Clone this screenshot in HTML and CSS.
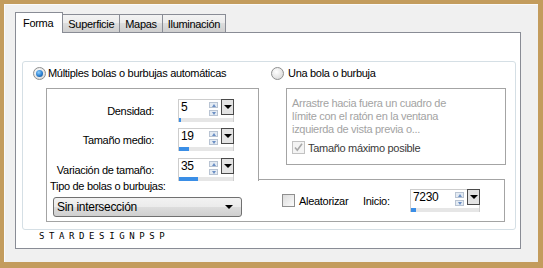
FILE: index.html
```html
<!DOCTYPE html>
<html lang="es">
<head>
<meta charset="utf-8">
<title>Burbujas</title>
<link rel="stylesheet" href="styles.css">
</head>
<body>
<div class="frame">
  <div class="tabs">
    <div class="tab active">Forma</div>
    <div class="tab">Superficie</div>
    <div class="tab">Mapas</div>
    <div class="tab">Iluminación</div>
  </div>
  <div class="panel">
    <div class="group">
      <div class="radios">
        <div class="radio-row first"><span class="radio on"></span><span>Múltiples bolas o burbujas automáticas</span></div>
        <div class="radio-row"><span class="radio"></span><span>Una bola o burbuja</span></div>
      </div>
      <div class="body">
        <div class="lbox">
          <div class="lbox-top">
            <div class="field">
              <span class="flabel">Densidad:</span>
              <div class="spin">
                <div class="spin-main"><span class="val">5</span><span class="arrows"><i class="up"></i><i class="down"></i></span><span class="dd"></span></div>
                <div class="bar"><div class="fill" style="width:2px"></div></div>
              </div>
            </div>
            <div class="field f2">
              <span class="flabel">Tamaño medio:</span>
              <div class="spin">
                <div class="spin-main"><span class="val">19</span><span class="arrows"><i class="up"></i><i class="down"></i></span><span class="dd"></span></div>
                <div class="bar"><div class="fill" style="width:10px"></div></div>
              </div>
            </div>
            <div class="field f3">
              <span class="flabel">Variación de tamaño:</span>
              <div class="spin">
                <div class="spin-main"><span class="val">35</span><span class="arrows"><i class="up"></i><i class="down"></i></span><span class="dd"></span></div>
                <div class="bar"><div class="fill" style="width:19px"></div></div>
              </div>
            </div>
          </div>
          <div class="lbox-bottom">
            <div class="tipo">Tipo de bolas o burbujas:</div>
            <div class="select"><span>Sin intersección</span><span class="caret"></span></div>
          </div>
        </div>
        <div class="rcol">
          <div class="rbox">
            <p class="hint">Arrastre hacia fuera un cuadro de<br>límite con el ratón en la ventana<br>izquierda de vista previa o...</p>
            <div class="chk-row"><span class="check disabled"><svg width="11" height="11" viewBox="0 0 11 11"><path d="M2 5.5 L4.3 8.2 L9 1.8" fill="none" stroke="#a8a8a8" stroke-width="1.6"/></svg></span><span class="chk-text">Tamaño máximo posible</span></div>
          </div>
          <div class="bbox">
            <span class="check"></span><span class="alea">Aleatorizar</span>
            <span class="inicio">Inicio:</span>
            <div class="spin wide">
              <div class="spin-main"><span class="val">7230</span><span class="arrows"><i class="up"></i><i class="down"></i></span><span class="dd"></span></div>
              <div class="bar"><div class="fill" style="width:5px"></div></div>
            </div>
          </div>
        </div>
      </div>
    </div>
    <div class="mark">STARDESIGNPSP</div>
  </div>
</div>
</body>
</html>
```
FILE: styles.css
```css
* { box-sizing: border-box; }
html, body { margin: 0; padding: 0; }
body {
  width: 543px;
  height: 268px;
  font-family: "Liberation Sans", Arial, sans-serif;
  font-size: 11px;
  letter-spacing: -0.3px;
  color: #000;
  background: #c39c5d;
}
.frame {
  width: 543px;
  height: 268px;
  border-style: solid;
  border-color: #c39c5d;
  border-width: 4px 5px 6px 4px;
  background: #f0f0f0;
  box-shadow: inset 1px 1px 0 #fafafa;
  padding: 8px 17px 0 11px;
}
.tabs {
  display: flex;
  align-items: flex-end;
  height: 21px;
  margin-bottom: -1px;
  position: relative;
  z-index: 1;
}
.tab {
  height: 18px;
  margin-bottom: 1px;
  padding: 2px 5px 0 5px;
  border: 1px solid #898c95;
  border-bottom: none;
  border-left: none;
  background: linear-gradient(#f3f3f3, #ebebeb 50%, #dddddd 50%, #cfcfcf);
  line-height: 14px;
}
.tab.active {
  height: 21px;
  margin-bottom: 0;
  padding: 3px 9px 0 7px;
  border-left: 1px solid #898c95;
  background: #fff;
  line-height: 14px;
}
.panel {
  width: 506px;
  height: 217px;
  border: 1px solid #898c95;
  background: #fff;
  padding: 28px 0 0 6px;
}
.group {
  width: 494px;
  border: 1px solid #d5dfe5;
  border-radius: 3px;
  padding: 5px 0 7px 10px;
}
.radios { display: flex; height: 13px; align-items: center; }
.radio-row { display: flex; align-items: center; gap: 2px; line-height: 13px; }
.radio-row.first { width: 238px; }
.radio-row + .radio-row { gap: 4px; }
.radio {
  width: 13px; height: 13px;
  border-radius: 50%;
  border: 1px solid #8e8f8f;
  background: radial-gradient(circle at 40% 35%, #ffffff, #e0e0e0 70%, #cfcfcf);
  display: flex; align-items: center; justify-content: center;
}
.radio.on::after {
  content: "";
  width: 7px; height: 7px; border-radius: 50%;
  background: radial-gradient(circle at 40% 35%, #8fd0ff, #2a7fd0 55%, #0b3f7a);
}
.body { display: flex; margin: 8px 0 0 13px; }
.lbox { width: 213px; }
.lbox-top {
  border: 1px solid #a4a4a4;
  border-bottom: none;
  padding-top: 10px;
  height: 93px;
}
.field { display: flex; align-items: center; }
.field.f2 { margin-top: 6px; }
.field.f3 { margin-top: 7px; }
.flabel { width: 107px; text-align: right; padding-top: 1px; }
.spin {
  width: 56px; height: 23px;
  margin-left: 24px;
  border: 1px solid #cdcdcd;
  background: #fff;
  display: flex; flex-direction: column;
}
.spin.wide { width: 70px; height: 23px; margin-left: 0; }
.spin-main { display: flex; height: 16px; }
.val { flex: 1; padding: 1px 0 0 2px; line-height: 12px; font-size: 12px; }
.arrows { width: 10px; display: flex; flex-direction: column; gap: 2px; padding-top: 2px; margin-right: 2px; }
.arrows i {
  display: block; width: 9px; height: 6px;
  border: 1px solid #b9c4d3;
  background: #e4ebf3;
  position: relative;
}
.arrows i::after {
  content: ""; position: absolute; left: 1.5px; top: 1px;
  border-left: 2.5px solid transparent; border-right: 2.5px solid transparent;
}
.arrows .up::after { border-bottom: 3px solid #6b8fc4; }
.arrows .down::after { border-top: 3px solid #6b8fc4; }
.dd {
  width: 13px; height: 16px;
  margin-top: -1px; margin-right: -1px;
  border: 1px solid #4a4a4a;
  background: #e3e3e3;
  display: flex; align-items: center; justify-content: center;
}
.dd::after {
  content: "";
  border-left: 4px solid transparent; border-right: 4px solid transparent;
  border-top: 4px solid #000;
}
.bar { height: 4px; margin-top: 2px; background: #e6e6e6; }
.fill { height: 4px; background: #3a8ee6; }
.lbox-bottom {
  height: 42px;
  border-left: 1px solid #a4a4a4;
  border-bottom: 1px solid #a4a4a4;
  padding: 0 0 0 3px;
}
.tipo { line-height: 13px; margin-top: -1px; }
.select {
  width: 189px; height: 20px;
  margin: 4px 0 0 3px;
  border: 1px solid #707070;
  border-radius: 3px;
  background: linear-gradient(#f2f2f2, #ebebeb 50%, #dddddd 50%, #cfcfcf);
  display: flex; align-items: center; justify-content: space-between;
  padding: 0 8px 0 3px;
  font-size: 12px;
}
.caret {
  border-left: 4px solid transparent; border-right: 4px solid transparent;
  border-top: 4px solid #000;
}
.rcol { width: 246px; }
.rbox {
  width: 220px; height: 77px;
  margin-left: 27px;
  border: 1px solid #a4a4a4;
  padding: 8px 0 0 5px;
}
.hint { margin: 0; color: #a3a3a3; line-height: 13px; }
.chk-row { display: flex; align-items: center; gap: 3px; margin-top: 5px; color: #3a3a3a; }
.check {
  width: 13px; height: 13px;
  border: 1px solid #8f8f8f;
  background: linear-gradient(135deg, #dcdcdc, #fbfbfb);
  display: inline-flex; align-items: center; justify-content: center;
}
.check.disabled { border-color: #c2c2c2; background: #f4f4f4; }
.bbox {
  height: 43px;
  margin-top: 14px;
  border: 1px solid #a4a4a4;
  border-left: none;
  display: flex; align-items: center;
  padding-left: 23px;
}
.alea { margin-left: 4px; width: 64px; }
.inicio { width: 47px; }
.mark {
  margin: 2px 0 0 17px;
  font-family: "DejaVu Sans Mono", monospace;
  font-weight: normal;
  font-size: 9px;
  line-height: 9px;
  letter-spacing: 4.6px;
  color: #000;
}
```
